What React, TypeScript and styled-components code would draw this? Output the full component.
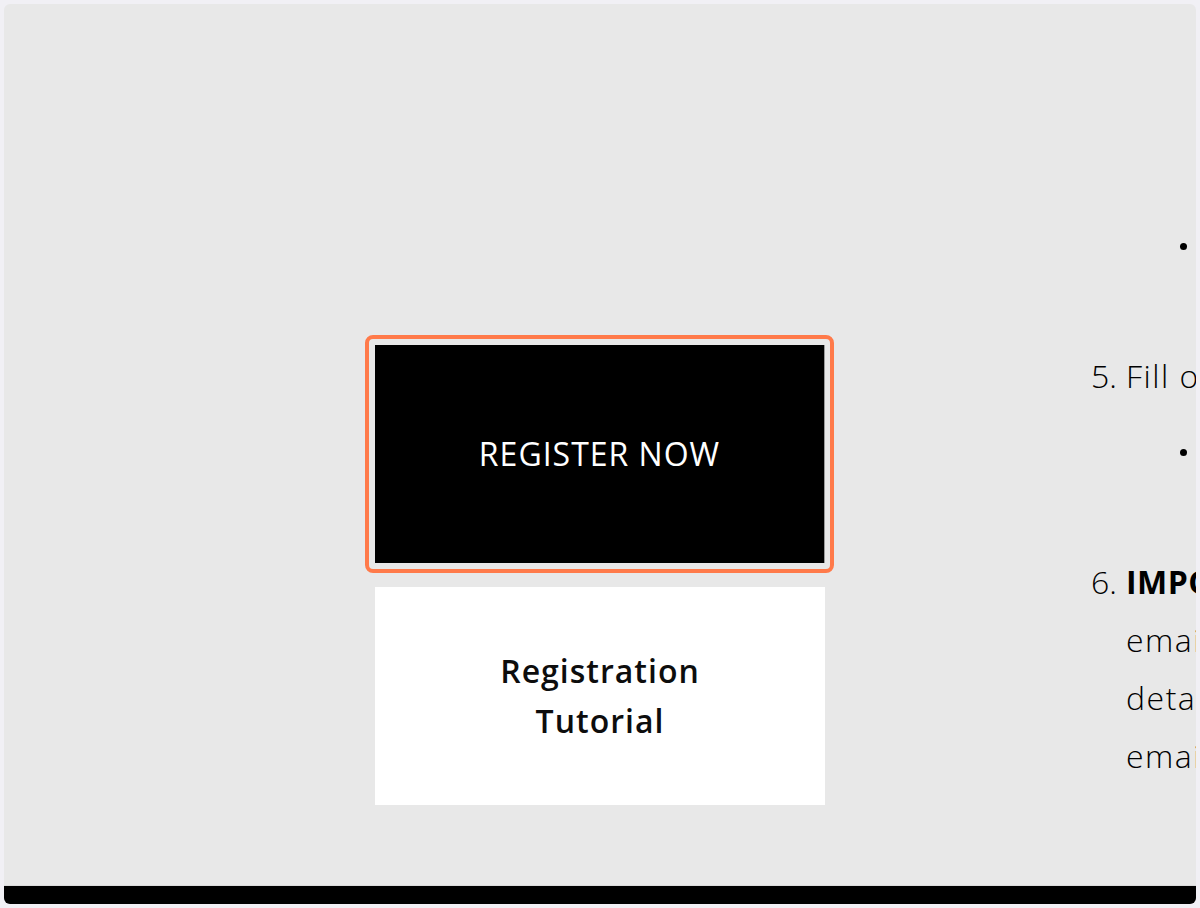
import { FC } from 'react';
import styled, { createGlobalStyle } from 'styled-components';

const GlobalStyle = createGlobalStyle`
  html, body {
    margin: 0;
    padding: 0;
    background: #f1f0f5;
  }
  body {
    font-family: 'Open Sans', 'Liberation Sans', sans-serif;
  }
`;

const Frame = styled.div`
  box-sizing: border-box;
  width: 1200px;
  height: 908px;
  border: 4px solid #f1f0f5;
  border-radius: 10px;
  background: #e8e8e8;
  overflow: hidden;
  display: flex;
  flex-direction: column;
`;

const Main = styled.main`
  flex: 1;
  min-height: 0;
  display: flex;
  overflow: hidden;
`;

const Footer = styled.footer`
  flex: 0 0 18px;
  background: #000;
  border-top: 1px solid #dadada;
`;

const ButtonColumn = styled.div`
  flex: 0 0 1087px;
  box-sizing: border-box;
  padding: 341px 0 0 371px;
  display: flex;
  flex-direction: column;
  align-items: flex-start;
  gap: 24px;
`;

const CtaBox = styled.a<{ $variant: 'dark' | 'light' }>`
  position: relative;
  box-sizing: border-box;
  width: 450px;
  height: 218px;
  display: flex;
  align-items: center;
  justify-content: center;
  text-align: center;
  text-decoration: none;
  font-size: 32px;
  background: ${({ $variant }) => ($variant === 'dark' ? '#000' : '#fff')};
  color: ${({ $variant }) => ($variant === 'dark' ? '#fff' : '#0d0d0d')};
  font-weight: ${({ $variant }) => ($variant === 'dark' ? 400 : 600)};
  letter-spacing: 1px;
  line-height: 50px;
  border-right: ${({ $variant }) => ($variant === 'dark' ? '1px solid #9a9a9a' : 'none')};
`;

const FocusRing = styled.span`
  position: absolute;
  inset: -10px;
  border: 4px solid #ff7a4a;
  border-radius: 8px;
  pointer-events: none;
`;

const Label = styled.span`
  max-width: 250px;
`;

const StepsColumn = styled.div`
  flex: 0 0 900px;
  box-sizing: border-box;
  padding-top: 211px;
  display: flex;
  flex-direction: column;
  gap: 16px;
  font-size: 32px;
  line-height: 58px;
  font-weight: 300;
  letter-spacing: 1.5px;
  color: #000;
  white-space: nowrap;
`;

const StepList = styled.ol`
  margin: 0;
  padding: 0;
  list-style: none;
  display: flex;
  flex-direction: column;
  gap: 16px;
`;

const Step = styled.li`
  display: grid;
  grid-template-columns: 35px 1fr;
`;

const StepNumber = styled.span`
  letter-spacing: 0;
`;

const StepBody = styled.div`
  display: flex;
  flex-direction: column;
  gap: 16px;
`;

const SubList = styled.ul<{ $indent?: number }>`
  margin: 0;
  padding: 0 0 0 ${({ $indent = 0 }) => $indent}px;
  list-style: none;
  display: flex;
  flex-direction: column;
  gap: 16px;
`;

const SubItem = styled.li`
  display: grid;
  grid-template-columns: 74px 1fr;
`;

const Bullet = styled.span`
  width: 7px;
  height: 7px;
  border-radius: 50%;
  background: #000;
  justify-self: end;
  margin: 28px 13px 0 0;
`;

const Strong = styled.strong`
  font-weight: 700;
  letter-spacing: 0.5px;
`;

const App: FC = () => (
  <>
    <GlobalStyle />
    <Frame>
      <Main>
        <ButtonColumn>
          <CtaBox $variant="dark" href="#register">
            REGISTER NOW
            <FocusRing />
          </CtaBox>
          <CtaBox $variant="light" href="#tutorial">
            <Label>Registration Tutorial</Label>
          </CtaBox>
        </ButtonColumn>

        <StepsColumn>
          <SubList $indent={35}>
            <SubItem>
              <Bullet />
              <span>
                Select the event you would like
                <br />
                to attend from the list.
              </span>
            </SubItem>
          </SubList>

          <StepList start={5}>
            <Step>
              <StepNumber>5.</StepNumber>
              <StepBody>
                <span>Fill out the registration form.</span>
                <SubList>
                  <SubItem>
                    <Bullet />
                    <span>
                      Make sure every required
                      <br />
                      field has been completed.
                    </span>
                  </SubItem>
                </SubList>
              </StepBody>
            </Step>
            <Step>
              <StepNumber>6.</StepNumber>
              <span>
                <Strong>IMPORTANT:</Strong> use the same
                <br />
                email address for your account
                <br />
                details, then check your
                <br />
                email for the confirmation.
              </span>
            </Step>
          </StepList>
        </StepsColumn>
      </Main>
      <Footer />
    </Frame>
  </>
);

export default App;
